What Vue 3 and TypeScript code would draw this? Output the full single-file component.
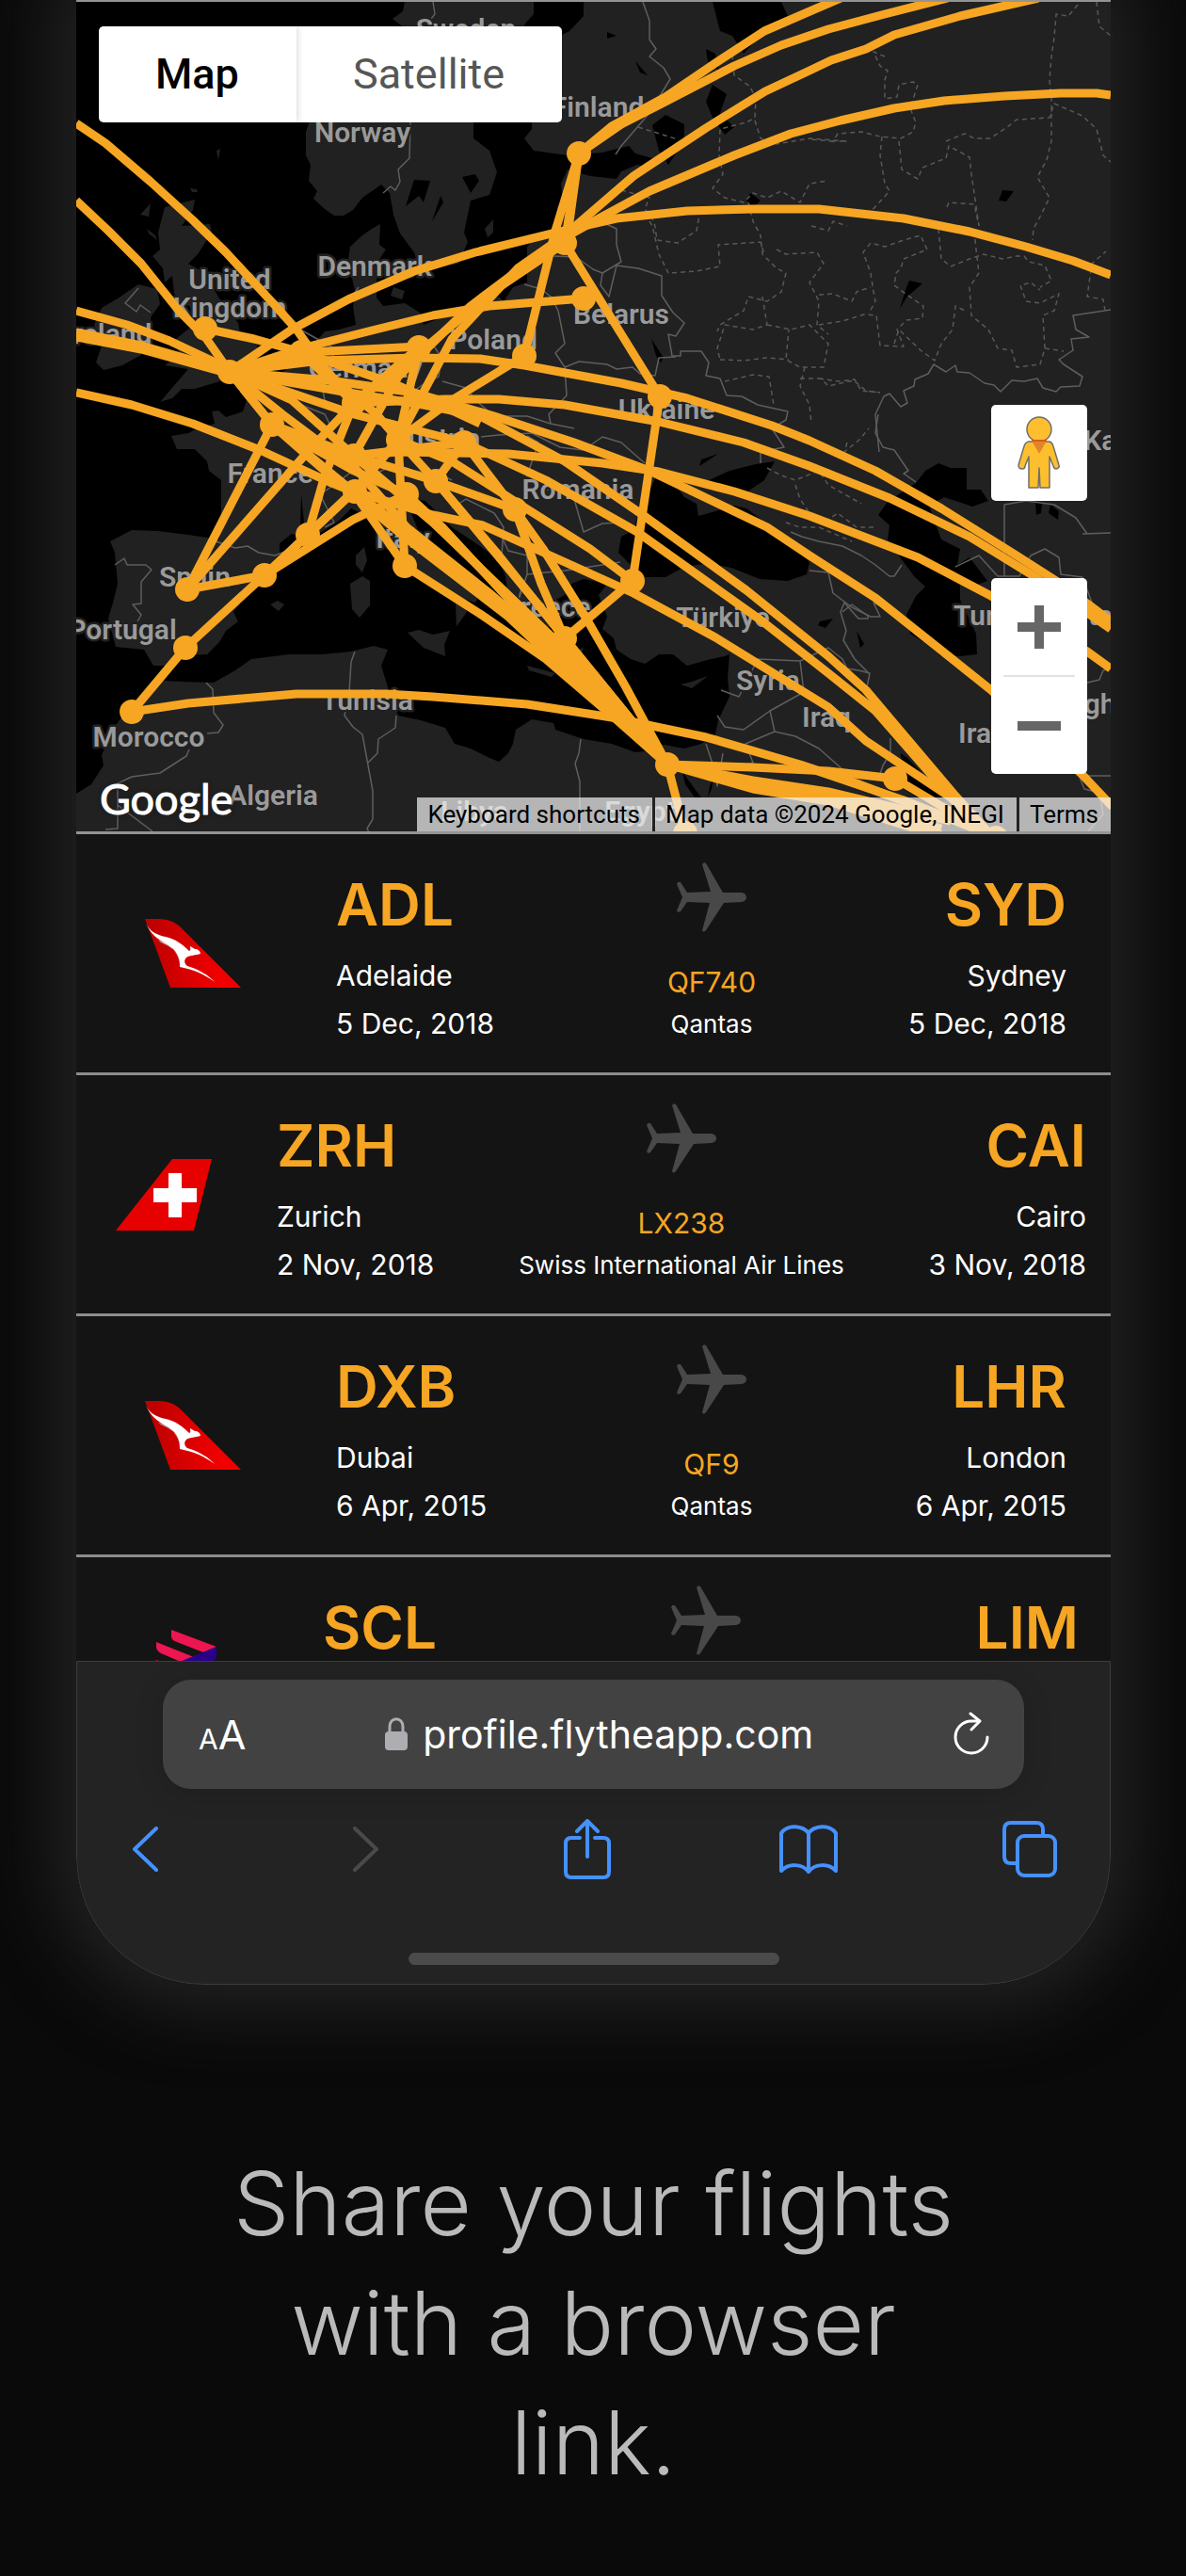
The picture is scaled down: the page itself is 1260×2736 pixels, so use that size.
<script setup lang="ts">
interface Flight {
  id: string
  layout: string
  airline: 'qantas' | 'swiss' | 'latam'
  from: string
  fromCity?: string
  departs?: string
  to: string
  toCity?: string
  arrives?: string
  flightNo?: string
  airlineName?: string
}

interface MapLabel {
  text: string
  x: number
  y: number
}

const flights: Flight[] = [
  { id: 'f1', layout: 'medium', airline: 'qantas', from: 'ADL', fromCity: 'Adelaide', departs: '5 Dec, 2018', to: 'SYD', toCity: 'Sydney', arrives: '5 Dec, 2018', flightNo: 'QF740', airlineName: 'Qantas' },
  { id: 'f2', layout: 'wide', airline: 'swiss', from: 'ZRH', fromCity: 'Zurich', departs: '2 Nov, 2018', to: 'CAI', toCity: 'Cairo', arrives: '3 Nov, 2018', flightNo: 'LX238', airlineName: 'Swiss International Air Lines' },
  { id: 'f3', layout: 'medium', airline: 'qantas', from: 'DXB', fromCity: 'Dubai', departs: '6 Apr, 2015', to: 'LHR', toCity: 'London', arrives: '6 Apr, 2015', flightNo: 'QF9', airlineName: 'Qantas' },
  { id: 'f4', layout: 'broad', airline: 'latam', from: 'SCL', to: 'LIM' },
]

// Country names, centred on x with their baseline on y.
const labels: MapLabel[] = [
  { text: 'Sweden', x: 495, y: 41 },
  { text: 'Norway', x: 385, y: 151 },
  { text: 'Finland', x: 635, y: 124 },
  { text: 'Denmark', x: 398, y: 293 },
  { text: 'United', x: 244, y: 307 },
  { text: 'Kingdom', x: 244, y: 337 },
  { text: 'Ireland', x: 115, y: 365 },
  { text: 'Germany', x: 388, y: 401 },
  { text: 'Poland', x: 524, y: 371 },
  { text: 'Belarus', x: 660, y: 344 },
  { text: 'Ukraine', x: 708, y: 445 },
  { text: 'Austria', x: 462, y: 476 },
  { text: 'France', x: 287, y: 513 },
  { text: 'Spain', x: 207, y: 623 },
  { text: 'Italy', x: 428, y: 582 },
  { text: 'Portugal', x: 130, y: 679 },
  { text: 'Morocco', x: 158, y: 793 },
  { text: 'Algeria', x: 290, y: 855 },
  { text: 'Tunisia', x: 390, y: 754 },
  { text: 'Libya', x: 504, y: 872 },
  { text: 'Egypt', x: 680, y: 872 },
  { text: 'Romania', x: 614, y: 530 },
  { text: 'Greece', x: 580, y: 655 },
  { text: 'Türkiye', x: 768, y: 666 },
  { text: 'Syria', x: 816, y: 733 },
  { text: 'Iraq', x: 878, y: 772 },
  { text: 'Iran', x: 1044, y: 789 },
  { text: 'Turkmenistan', x: 1106, y: 664 },
  { text: 'Kazakhstan', x: 1230, y: 478 },
  { text: 'Afghanistan', x: 1203, y: 758 },
  { text: 'Western', x: 60, y: 900 },
]

const seas: string[] = [
  '81,2 430,2 428,12 417,20 430,30 400,60 330,125 325,140 325,165 330,175 328,192 337,203 333,211 345,222 355,229 365,229 375,223 385,210 405,196 414,205 418,228 425,248 440,268 445,283 460,285 487,280 497,257 493,247 500,213 520,207 528,183 520,160 503,147 503,130 500,100 540,60 558,25 567,15 567,2 620,2 620,17 605,33 597,37 597,60 565,110 565,137 557,147 567,160 603,165 640,162 668,155 675,163 700,170 695,178 677,175 660,182 655,190 627,187 603,180 596,195 598,215 592,220 598,245 590,255 570,250 560,262 560,300 545,305 535,320 530,315 505,325 470,337 450,345 446,332 430,322 407,325 400,316 400,280 410,265 403,260 404,238 395,243 385,250 372,262 370,275 375,300 378,312 375,325 378,345 360,350 345,352 340,358 325,372 310,387 290,405 275,415 262,425 258,437 240,443 232,436 225,437 228,450 210,455 200,460 182,463 188,477 207,477 220,490 222,500 235,510 235,540 233,573 200,568 168,564 140,563 117,575 122,587 125,620 120,640 115,657 123,687 153,690 163,707 177,707 187,697 220,695 233,682 240,670 253,660 248,650 273,617 297,590 297,577 310,567 327,573 345,563 360,553 373,540 393,550 400,567 413,583 430,593 447,613 465,622 484,640 485,668 478,674 486,664 496,650 492,636 505,640 508,634 490,615 462,592 445,565 437,545 440,530 452,532 480,560 510,580 530,595 537,612 540,635 553,655 565,680 580,698 592,688 582,670 590,652 585,640 600,632 607,620 620,615 645,620 636,632 645,655 640,668 652,678 655,690 670,700 685,705 700,695 715,695 730,707 755,700 770,697 775,695 773,720 775,740 763,765 760,780 745,790 727,795 700,790 685,798 675,799 650,790 620,785 590,775 588,768 565,764 548,775 545,790 540,800 530,809 520,805 500,795 483,790 473,773 447,765 423,760 412,730 405,707 412,690 397,686 373,692 343,695 307,695 267,700 250,712 227,725 193,724 175,723 167,717 160,727 150,743 130,760 120,775 108,802 110,813 97,833 81,843',
  '657,587 660,570 673,563 680,540 697,507 713,510 727,528 740,535 742,548 760,543 780,537 793,540 837,573 860,597 857,610 837,617 807,615 777,603 753,598 727,602 707,613 683,613',
  '747,513 775,500 803,493 823,490 812,510 787,527 770,520',
  '933,547 943,533 973,513 983,500 997,492 1010,497 1027,497 1027,520 1042,520 1050,532 1033,538 1003,528 987,537 1000,573 1020,583 1017,600 1030,592 1049,617 1035,622 1020,620 1020,637 1037,673 1038,695 1020,697 1000,697 983,683 967,673 963,653 973,633 983,623 972,613 957,593 943,573 945,558',
  '693,133 707,122 727,132 727,150 710,175 700,160',
  '757,90 772,100 765,120 780,135 770,143 757,125 750,108',
  '757,2 830,2 837,17 817,27 803,43 790,57 778,38 765,33',
  '750,52 760,57 764,75 752,65',
  '440,191 457,192 450,215 445,208 431,219',
  '468,208 471,215 459,235',
  '957,800 965,806 1006,850 992,858 960,838',
  '1100,534 1107,533 1106,545 1101,547',
  '1116,536 1125,543 1124,552 1114,545',
  '725,820 736,835 745,847 738,847 728,833',
  '758,827 756,838 752,847 754,835',
  '1065,202 1077,203 1069,214 1061,213',
  '966,298 980,301 963,316 956,328 962,308',
  '692,360 705,380 702,385 697,378',
  '675,65 688,80 680,77',
  '500,205 491,188 505,185 509,192',
  '645,34 655,38 645,41',
  '743,495 763,482 745,488',
  '320,525 323,555 319,560',
  '871,660 885,657 877,667 869,664',
  '910,670 918,684 914,688',
  '797,205 808,213 800,220 793,213',
]

const islands: string[] = [
  '175,220 207,212 205,223 193,240 223,238 225,247 210,270 200,280 217,290 233,317 253,343 255,353 273,360 273,377 260,387 240,403 207,413 193,413 183,423 170,427 187,407 200,392 175,388 190,377 187,360 203,347 203,327 185,312 183,293 175,300 173,285 162,272 170,265 168,247',
  '125,317 147,302 167,307 170,323 160,337 160,360 150,377 130,388 110,393 102,385 108,367 100,345 108,327',
  '149,228 160,216 158,230',
  '156,243 165,250 167,255 158,248',
  '202,200 209,201 210,204 204,204',
  '230,160 234,158 232,170',
  '378,590 387,581 390,595 385,608 378,600',
  '372,620 385,612 393,617 393,643 382,656 374,647',
  '433,672 445,669 460,674 478,670 472,685 473,697 450,688',
  '287,642 295,638 302,642 296,649',
  '515,243 524,233 524,247 518,252',
  '418,305 430,309 427,318 415,314',
  '723,727 735,724 752,718 735,731',
  '560,707 590,715 586,719 562,712',
  '613,690 620,688 617,697',
]

const borders: string[] = [
  '460,2 462,15 454,25 436,130 435,168 423,180 425,193 420,202 415,198 407,205',
  '683,2 690,22 690,42 697,52 690,60 705,72 712,84 690,120 660,155 654,164',
  '622,230 640,236 655,243 655,260 660,278 640,290 630,286 612,273 588,272',
  '640,290 638,303 647,315 655,282 678,285 703,293 703,314 715,332 727,343 718,357 710,355 714,378 723,378 723,373 745,373 753,385 750,399 765,402 772,420 788,421 805,430 837,437 835,446 820,455 833,475 808,480 808,492',
  '557,302 575,307 585,315 593,330 600,365 590,375 600,390 602,420 583,440 585,450 610,455',
  '600,390 615,384 645,387 655,392 672,390 680,397 696,399 700,380 718,379',
  '460,366 469,380 466,400 450,408 440,415',
  '470,405 495,412 505,425 525,442 560,442 585,450',
  '502,465 530,462 565,460 595,475 620,478 640,464 660,470 677,485 685,492',
  '560,463 572,470 555,520 590,520 610,530 620,565 640,556 660,555',
  '480,540 495,530 525,545 535,560 533,590 520,585',
  '533,570 540,585 560,590 560,610 600,606 640,600 659,597',
  '560,610 550,640 555,620',
  '229,575 250,582 263,580 275,587 292,590 305,585',
  '122,600 132,593 135,600 155,600 161,605 150,618 150,641 141,642 150,653 146,660',
  '319,350 355,370 352,385 340,400 345,425 360,440',
  '304,417 320,430 345,440 350,450 345,470 330,480 320,490',
  '345,560 355,555 340,525 355,515 375,500 400,510',
  '395,505 420,493 440,500 470,505 480,510',
  '381,305 377,311 388,312',
  '147,306 133,322 145,331 149,324 160,332',
  '377,692 373,703 371,735 366,760 375,772 385,780 396,840 396,870 390,880 392,884',
  '421,760 420,773 402,785 401,800 391,810',
  '219,725 226,732 227,757 237,770 232,778 220,779',
  '201,796 198,803 170,821 140,825 125,832 125,880 112,881',
  '125,855 162,883',
  '617,785 615,800 611,811 616,830 616,884',
  '766,733 785,740 805,700 850,702 880,688 895,700 900,710 912,712 924,715 920,735',
  '850,702 854,735 818,755 790,775 770,772 762,760',
  '818,755 823,777 845,782 870,795 895,817',
  '823,777 792,790 800,810 785,815',
  '750,790 760,820 762,835 768,800',
  '840,565 852,570 870,575 895,580 915,590 930,600 945,612 950,612 958,600',
  '860,606 880,608 885,630 905,645 925,655 935,655 928,640 950,650 962,665',
  '895,650 905,642 922,654 922,657 912,657 897,640 893,650 899,670 896,680 908,700 923,715',
  '934,480 930,440 939,421 945,418 957,432 964,428 960,415 971,410 972,403 986,397 992,387 1005,395 1015,388 1017,395 1030,396 1046,407 1056,409 1063,416 1075,404 1088,405 1102,402 1108,412 1122,416 1127,411 1147,410 1150,400 1130,387 1125,382 1140,372 1138,360 1157,358 1143,350 1140,335 1160,332 1180,329',
  '933,440 930,460 938,475 950,478 965,500 960,503 973,512',
  '1150,567 1180,566',
  '1067,612 1067,536 1090,532 1120,536 1143,550 1155,567',
  '1015,602 1040,590 1060,612 1083,612 1095,590 1110,583 1125,592 1127,610 1150,613 1160,640 1180,655',
  '1155,725 1168,722 1172,712 1180,710',
  '946,784 946,800 938,813 935,822',
  '1147,824 1180,824',
  '1146,823 1152,838 1168,842 1172,865 1155,884',
]

const provinces: string[] = [
  '778,58 780,80 797,92 803,105 802,125 793,130 765,137 764,165 768,185 757,200 770,210 790,215 800,205 815,210 830,203 850,215 860,195 880,192',
  '678,135 720,148', '802,128 808,147 825,153 860,147 900,150 880,150',
  '690,235 693,240 700,270 710,290 740,288 765,283 763,260 808,257 812,270',
  '660,202 690,210 685,222 695,235 698,255 720,258 740,245 743,228',
  '795,215 800,235 808,250 810,270 825,285 835,290 830,310 815,320 795,315 790,330 765,345 762,352',
  '825,265 835,270 868,268 875,280 860,300 870,320 868,345 880,355',
  '810,315 815,345 800,350 770,345 762,370 765,382',
  '815,345 840,350 860,345 880,365 875,390 850,390 835,382 838,350',
  '770,405 800,398 817,400 822,430', '765,382 790,383 815,380 838,382',
  '855,390 850,410 860,430 862,450', '850,402 872,402 880,410 907,404 920,415 935,417',
  '870,345 895,341 918,334 931,335 935,367 960,368 953,350 963,340 980,338 981,325 962,312 950,303 952,290 957,285 960,275 985,265 978,250 960,255 940,262 925,258 917,268 925,290 928,310 930,320 923,333',
  '870,313 885,312 905,320 910,310 925,305', '862,240 880,245 885,235 900,240',
  '940,60 928,55 935,70 943,75 940,85 940,105 953,103 955,90 970,87 975,90 967,115 973,130 970,140 957,147 935,145 915,140 890,142 885,150 860,148',
  '937,145 935,165 940,195 945,203 925,225',
  '955,150 958,180 975,190 980,178 1005,168 1008,155 1030,167 1032,185 1035,205 1040,240',
  '1005,150 1025,142 1035,147 1052,147 1070,135 1080,127 1115,125 1120,110 1150,123 1165,137 1172,165 1180,172',
  '1145,5 1135,17 1122,15 1120,40 1117,60 1115,85 1117,105 1117,150 1112,170 1102,188 1115,210 1105,230 1098,243 1097,255',
  '1165,2 1168,28 1180,38', '1006,220 1008,215 1035,217 1040,240',
  '997,243 1000,275 1010,283 1030,275 1045,270 1065,275 1080,272 1088,272 1093,278 1110,282 1117,298 1105,305',
  '1035,245 1037,265 1040,290 1030,305 1032,335 1050,350 1060,370 1075,372 1080,390 1105,387 1110,370 1108,335 1120,330 1125,312 1105,322 1090,320 1084,303 1095,300 1105,308',
  '1110,370 1130,373', '1174,330 1172,318 1155,315 1160,280 1175,267',
  '950,365 955,350 978,372 993,383 1000,365 1012,350 1015,325 1025,330',
  '870,402 892,405 908,403 915,415 935,417',
  '815,497 830,505 845,510 870,500 880,515 915,535', '900,470 897,480 913,467 923,455',
  '845,515 850,530 860,545 875,555 890,545 910,560 930,560', '835,555 850,560 870,560 905,575',
]

// Flight paths across the visible part of the map.
const routes: string[] = [
  '81,131 112,152 160,193 205,234 240,268 290,322 315,350 340,385 376,428',
  '81,213 115,245 150,280 190,330 218,358 244,395 289,451',
  '81,330 135,345 180,362 244,392', '81,353 150,367 244,394', '81,358 150,371 244,397',
  '81,417 140,430 205,450 276,478 350,512 375,522',
  '244,395 310,350 370,318 440,288 505,268 590,247 655,232 730,224 800,222 870,222 960,232 1030,246 1090,262 1140,277 1180,292',
  '244,395 320,370 395,351 460,335 520,325 620,317',
  '244,395 330,374 445,368',
  '244,395 340,383 440,380 510,381 557,388 660,407 730,423 820,452 860,468 930,500 1000,540 1080,590 1130,622 1180,660',
  '320,374 376,428 473,424 530,424 600,430 700,448 790,470 860,495 945,529 1030,570 1100,613 1180,668',
  '376,484 423,480 540,482 640,492 700,501 780,522 860,548 975,592 1053,633 1155,692 1180,710',
  '244,395 350,404 440,417 525,442 610,470 690,500 815,560 860,590 930,635 1053,733 1150,823 1182,857',
  '244,395 376,418 450,430 510,442 600,490 683,547 793,627 880,697 920,733 1013,843 1060,895',
  '289,451 376,484 493,470', '218,349 270,360 320,374 420,408 510,450',
  '244,395 376,440 493,470 580,510 677,565 810,660 880,715 930,755 1000,835 1050,890',
  '320,374 400,440 423,467 480,490 540,528 627,583 672,617',
  '376,522 460,547 513,558 580,588 673,630 760,677 880,751 920,787 1010,847 1060,893',
  '463,511 547,541', '493,470 547,541 577,583 623,657 665,730 709,812', '547,541 575,620 600,678',
  '463,511 530,590 600,678 709,812', '493,470 463,511',
  '244,395 300,440 380,500 432,560 520,630 600,700 709,812',
  '289,451 345,500 432,572 540,655 630,740 709,812',
  '376,484 460,555 590,680 709,812', '423,467 463,511 570,640 600,678',
  '376,522 460,585 560,668 640,750 709,812', '432,525 470,560 590,690 709,812',
  '430,601 510,652 580,700 650,760 709,812', '375,522 430,601', '423,467 430,601',
  '672,617 600,678 709,812', '701,421 672,617', '600,258 701,421',
  '615,163 600,258', '615,163 590,245 557,378', '615,163 603,250',
  '557,378 480,425 423,467 376,522 327,568',
  '600,258 520,312 445,375 376,428', '600,250 550,285 480,360 423,467', '600,250 500,325 423,400 376,484',
  '445,369 423,467', '445,369 376,428',
  '140,756 197,688 281,611 327,568 375,522', '281,611 375,552 432,525', '281,611 376,522 423,467',
  '199,626 281,611', '199,626 289,451', '199,626 325,482 376,428', '327,568 345,505 376,428',
  '289,451 376,500 432,525', '244,395 289,451 375,522', '244,395 310,425 376,484 463,511',
  '140,756 200,747 315,737 410,737 460,740 560,748 650,762 750,783 850,812 910,832 1010,870',
  '709,812 728,885', '709,812 800,815 880,819 951,827', '951,827 1010,862 1050,890',
  '709,812 800,833 880,846 1000,880', '709,812 800,829 880,841 1010,872', '709,812 800,838 880,851 985,884', '860,816 960,850 1050,886',
  '615,163 650,134 707,103 760,67 812,33 865,10 893,-2',
  '615,163 660,132 707,108 780,70 830,48 880,31 940,15 1007,-2',
  '600,250 673,187 750,136 813,97 860,75 883,64 920,52 950,37 1020,17 1103,-2',
  '595,255 640,230 690,203 780,165 840,142 893,128 950,115 1003,107 1067,102 1127,99 1165,99 1180,101',
]

const airports: [number, number][] = [
  [615, 163], [600, 258], [620, 317], [557, 378], [701, 421], [218, 349], [244, 395], [320, 374], [445, 369],
  [289, 451], [376, 428], [423, 467], [376, 484], [493, 470], [463, 511], [377, 522], [432, 525], [327, 568],
  [281, 611], [199, 626], [197, 688], [140, 756], [430, 601], [547, 541], [672, 617], [600, 678], [709, 812],
  [951, 827], [728, 885], [990, 890], [1058, 890],
]
</script>

<template>
  <main class="page">
    <section class="phone" aria-label="Flight profile in a browser">
      <div class="map">
        <svg class="map-canvas" viewBox="81 2 1099 881" role="img" aria-label="Map of flights">
          <rect x="81" y="2" width="1099" height="881" fill="#212121" />
          <polygon v-for="(p, i) in seas" :key="'s' + i" :points="p" fill="#000" />
          <polygon v-for="(p, i) in islands" :key="'i' + i" :points="p" fill="#212121" />
          <g fill="none" stroke="#5e5e5e" stroke-width="1.5" stroke-linejoin="round">
            <polyline v-for="(p, i) in borders" :key="'b' + i" :points="p" />
            <g stroke="#585858" stroke-dasharray="5 4">
              <polyline v-for="(p, i) in provinces" :key="'p' + i" :points="p" />
            </g>
          </g>
          <g class="labels">
            <text v-for="l in labels" :key="l.text" :x="l.x" :y="l.y">{{ l.text }}</text>
          </g>
          <g fill="none" stroke="#f6a623" stroke-width="9" stroke-linejoin="round">
            <polyline v-for="(p, i) in routes" :key="'r' + i" :points="p" />
          </g>
          <g fill="#f6a623">
            <circle v-for="(a, i) in airports" :key="'a' + i" :cx="a[0]" :cy="a[1]" r="13" />
          </g>
        </svg>

        <div class="map-type">
          <button type="button" class="type-btn active">Map</button>
          <button type="button" class="type-btn">Satellite</button>
        </div>

        <div class="map-side">
          <button type="button" class="pegman" aria-label="Street View">
            <svg width="46" height="80" viewBox="0 0 46 80">
              <g fill="#fdbf2d" stroke="#6f6f6f" stroke-width="1.5" stroke-linejoin="round">
                <path d="M12 28 Q8 29 7 33 L1 53 Q1 57 5 57 Q8 57 8 54 L12 44 V77 H22 L23 56 L24 77 H34 V44 L38 54 Q39 57 41 57 Q45 56 44 53 L38 33 Q37 29 34 28 Z" />
                <circle cx="23" cy="15" r="13" />
              </g>
              <path d="M15 27 H31 L23 41 Z" fill="#e28429" />
              <path d="M15 27 H31" stroke="#d95b25" stroke-width="2" />
            </svg>
          </button>
          <div class="zoom">
            <button type="button" aria-label="Zoom in">
              <svg width="46" height="46" viewBox="0 0 46 46" fill="#666"><path d="M18 0H28V18H46V28H28V46H18V28H0V18H18Z" /></svg>
            </button>
            <i class="zoom-rule"></i>
            <button type="button" aria-label="Zoom out">
              <svg width="46" height="46" viewBox="0 0 46 46" fill="#666"><path d="M0 18H46V28H0Z" /></svg>
            </button>
          </div>
        </div>

        <a href="#google" class="google">Google</a>
        <div class="credits">
          <button type="button">Keyboard shortcuts</button>
          <span>Map data ©2024 Google, INEGI</span>
          <a href="#terms">Terms</a>
        </div>
      </div>

      <ul class="flights">
        <li v-for="f in flights" :key="f.id" class="flight" :class="f.layout">
          <div class="tail">
            <svg v-if="f.airline === 'qantas'" width="102" height="73" viewBox="0 0 102 73" role="img" aria-label="Qantas">
              <defs>
                <linearGradient :id="'tail-' + f.id" x1="0" y1="0" x2="1" y2="0">
                  <stop offset="0.1" stop-color="#c00000" />
                  <stop offset="0.8" stop-color="#f20000" />
                </linearGradient>
              </defs>
              <path d="M0 0H14C26 0 34 4 41 12L102 73H27Z" :fill="`url(#tail-${f.id})`" />
              <path d="M1 5C5 13 12 17 22 19C32 21 40 27 47 34C49 33 48 31 48 29L53 32C56 32 59 34 59 37C54 39 48 38 44 41C41 44 42 48 45 50C58 54 68 60 74 67C62 58 52 54 37 51C37 44 36 38 30 32C22 25 9 22 1 5Z" fill="#fff" />
              <path d="M14 23C24 25 33 32 37 46C36 38 32 34 28 31C23 27 18 26 14 23Z" fill="#bbb" />
            </svg>
            <svg v-else-if="f.airline === 'swiss'" width="102" height="76" viewBox="0 0 102 76" role="img" aria-label="Swiss">
              <path d="M0 76L60 0H102L83 76Z" fill="#e60000" />
              <path d="M56 15H70V31H86V46H70V62H56V46H40V31H56Z" fill="#fff" />
            </svg>
            <svg v-else width="64" height="100" viewBox="0 0 64 100" role="img" aria-label="LATAM">
              <path d="M16 0L64 18L50 24L22 13Q16 11 16 7Z" fill="#ed1651" />
              <path d="M0 13L40 29L26 34L5 25Q0 22 0 18Z" fill="#ed1651" />
              <path d="M64 18V28Q64 32 58 34L20 48V36Z" fill="#2a0088" />
              <path d="M0 32L26 42V52L5 44Q0 42 0 38Z" fill="#ed1651" />
            </svg>
          </div>
          <div class="place">
            <strong>{{ f.from }}</strong>
            <span v-if="f.fromCity">{{ f.fromCity }}</span>
            <time v-if="f.departs">{{ f.departs }}</time>
          </div>
          <div class="carrier">
            <svg width="75" height="74" viewBox="0 0 75 74" fill="#484848" aria-hidden="true">
              <path d="M49 32L69 32Q74 33 74 37Q74 41 69 42L50 43L31 72Q28 75 27 72L35 43L11 42L4 52Q1 54 0 51L6 37L0 23Q1 20 4 21L11 32L36 31L27 2Q29 -1 31 1Z" />
            </svg>
            <a v-if="f.flightNo" :href="'#' + f.flightNo">{{ f.flightNo }}</a>
            <span v-if="f.airlineName">{{ f.airlineName }}</span>
          </div>
          <div class="place arrival">
            <strong>{{ f.to }}</strong>
            <span v-if="f.toCity">{{ f.toCity }}</span>
            <time v-if="f.arrives">{{ f.arrives }}</time>
          </div>
        </li>
      </ul>

      <footer class="browser">
        <div class="address">
          <button type="button" class="reader" aria-label="Text size"><small>A</small>A</button>
          <div class="url">
            <svg width="24" height="36" viewBox="0 0 24 36" aria-hidden="true">
              <path d="M5 16V10C5 -1 19 -1 19 10V16" fill="none" stroke="#aeaeb2" stroke-width="3" />
              <rect x="0" y="15" width="24" height="20" rx="4" fill="#aeaeb2" />
            </svg>
            <span>profile.flytheapp.com</span>
          </div>
          <button type="button" class="reload" aria-label="Reload">
            <svg width="40" height="48" viewBox="0 0 40 48" fill="none" stroke="#fff" stroke-width="3" stroke-linecap="round" stroke-linejoin="round">
              <path d="M37 27A17 17 0 1 1 20 10H28" />
              <path d="M19 2L29 10L20 19" />
            </svg>
          </button>
        </div>
        <nav class="tools" aria-label="Browser">
          <button type="button" aria-label="Back">
            <svg width="28" height="48" viewBox="0 0 28 48" class="blue"><path d="M26 2L3 24L26 46" /></svg>
          </button>
          <button type="button" aria-label="Forward">
            <svg width="28" height="48" viewBox="0 0 28 48" class="grey"><path d="M2 2L25 24L2 46" /></svg>
          </button>
          <button type="button" aria-label="Share">
            <svg width="50" height="64" viewBox="0 0 50 64" class="blue">
              <path d="M17 20H8Q2 20 2 26V56Q2 62 8 62H42Q48 62 48 56V26Q48 20 42 20H33" />
              <path d="M25 40V3M14 13L25 2L36 13" />
            </svg>
          </button>
          <button type="button" aria-label="Bookmarks">
            <svg width="62" height="52" viewBox="0 0 62 52" class="blue">
              <path d="M31 9C25 1 9 -1 2 9V49C10 41 24 41 31 50C38 41 52 41 60 49V9C53 -1 37 1 31 9ZM31 9V50" />
            </svg>
          </button>
          <button type="button" aria-label="Tabs">
            <svg width="58" height="60" viewBox="0 0 58 60" class="blue">
              <rect x="16" y="16" width="40" height="42" rx="7" />
              <path d="M16 45H9Q2 45 2 38V9Q2 2 9 2H36Q43 2 43 9V16" />
            </svg>
          </button>
        </nav>
        <i class="home-bar"></i>
      </footer>
    </section>

    <h1 class="caption">Share your flights<br />with a browser<br />link.</h1>
  </main>
</template>

<style>
body {
  margin: 0;
  background: #0a0a0a;
}
</style>

<style scoped>
.page {
  box-sizing: border-box;
  min-height: 100vh;
  padding: 0 80px 44px 81px;
  overflow: hidden;
  background: #0a0a0a;
  color: #fff;
  font-family: Inter, "Open Sans", sans-serif;
}

button {
  padding: 0;
  border: 0;
  background: none;
  color: inherit;
  font: inherit;
}

a {
  color: inherit;
  text-decoration: none;
}

svg {
  display: block;
}

.phone {
  overflow: hidden;
  border-radius: 0 0 136px 136px;
  background: #141414;
  box-shadow: 0 0 70px 28px #212121;
}

.map {
  position: relative;
  overflow: hidden;
  border-top: 2px solid #949494;
  border-bottom: 3px solid #949494;
}

.map-canvas {
  width: 100%;
  height: auto;
}

.labels {
  fill: #9a9a9a;
  stroke: #212121;
  stroke-width: 5px;
  stroke-linejoin: round;
  paint-order: stroke;
  font: 600 30px Roboto, sans-serif;
  text-anchor: middle;
}

.map-type {
  position: absolute;
  top: 26px;
  left: 24px;
  display: flex;
  height: 102px;
  border-radius: 5px;
  overflow: hidden;
  background: #fff;
  font-family: Roboto, sans-serif;
  font-size: 45px;
}

.type-btn {
  padding: 0 61px 2px 60px;
  color: #565656;
}

.type-btn.active {
  color: #000;
  font-weight: 500;
  box-shadow: 0 0 8px rgba(0, 0, 0, 0.2);
}

.map-side {
  position: absolute;
  top: 428px;
  right: 25px;
  display: flex;
  flex-direction: column;
  gap: 82px;
}

.pegman,
.zoom {
  width: 102px;
  border-radius: 5px;
  background: #fff;
}

.pegman {
  display: flex;
  align-items: center;
  justify-content: center;
  height: 102px;
}

.zoom button {
  display: flex;
  align-items: center;
  justify-content: center;
  width: 100%;
  height: 103px;
}

.zoom-rule {
  display: block;
  height: 2px;
  margin: 0 13px;
  background: #e2e2e2;
}

.google {
  position: absolute;
  bottom: 8px;
  left: 25px;
  color: #fff;
  font-family: Lato, sans-serif;
  font-size: 45px;
  line-height: 54px;
  -webkit-text-stroke: 1px #fff;
  text-shadow: 0 0 4px #222, 0 0 4px #222;
}

.credits {
  position: absolute;
  right: 0;
  bottom: 0;
  display: flex;
  color: #000;
  font: 26px/36px Roboto, sans-serif;
}

.credits > * {
  padding: 0 13px 0 11px;
  background: rgba(245, 245, 245, 0.7);
}

.credits > * + * {
  border-left: 3px solid #222;
}

.flights {
  height: 878px;
  margin: 0;
  padding: 0;
  overflow: hidden;
  list-style: none;
}

.flight {
  display: grid;
  align-items: start;
  height: 253px;
  border-bottom: 3px solid #8d8d8d;
}

.flight.medium {
  grid-template-columns: 276fr 299fr 200fr 277fr 47fr;
}

.flight.wide {
  grid-template-columns: 213fr 250fr 360fr 250fr 26fr;
}

.flight.broad {
  grid-template-columns: 262fr 307fr 200fr 296fr 34fr;
}

.tail {
  display: flex;
  align-items: center;
  justify-content: center;
  height: 253px;
  padding-right: 28px;
}

.place {
  display: flex;
  flex-direction: column;
  padding-top: 31px;
  font-size: 30px;
  line-height: 51px;
  white-space: nowrap;
}

.place strong {
  margin-bottom: 6px;
  color: #f6a623;
  font-size: 62px;
  font-weight: 600;
  line-height: 88px;
}

.arrival {
  align-items: flex-end;
}

.carrier {
  display: flex;
  flex-direction: column;
  align-items: center;
  padding-top: 30px;
  white-space: nowrap;
  font-size: 26px;
  line-height: 40px;
}

.carrier a {
  margin-top: 28px;
  color: #f6a623;
  font-size: 30px;
  line-height: 50px;
}

.browser {
  display: flex;
  flex-direction: column;
  align-items: stretch;
  padding: 19px 0 20px;
  border: 1px solid #3c3c3c;
  border-radius: 0 0 136px 136px;
  background: #232323;
}

.address {
  display: flex;
  align-items: center;
  justify-content: space-between;
  height: 116px;
  margin: 0 91px;
  padding: 0 36px 0 38px;
  border-radius: 30px;
  background: #424242;
  box-shadow: 0 4px 30px rgba(0, 0, 0, 0.15);
}

.reader {
  font-size: 43px;
}

.reader small {
  font-size: 30px;
}

.url {
  display: flex;
  align-items: center;
  gap: 16px;
  font-size: 41px;
}

.tools {
  display: flex;
  justify-content: space-between;
  align-items: center;
  height: 64px;
  margin: 32px 54px 78px 41px;
}

.tools button {
  display: flex;
  justify-content: center;
  width: 62px;
}

.blue,
.grey {
  fill: none;
  stroke: #4591ff;
  stroke-width: 4;
  stroke-linecap: round;
  stroke-linejoin: round;
}

.grey {
  stroke: #4a4a4a;
}

.home-bar {
  width: 394px;
  height: 13px;
  align-self: center;
  border-radius: 7px;
  background: #4b4b4b;
}

.caption {
  margin: 169px 0 0;
  color: #bababa;
  font-size: 94px;
  font-weight: 300;
  line-height: 127px;
  text-align: center;
}
</style>
